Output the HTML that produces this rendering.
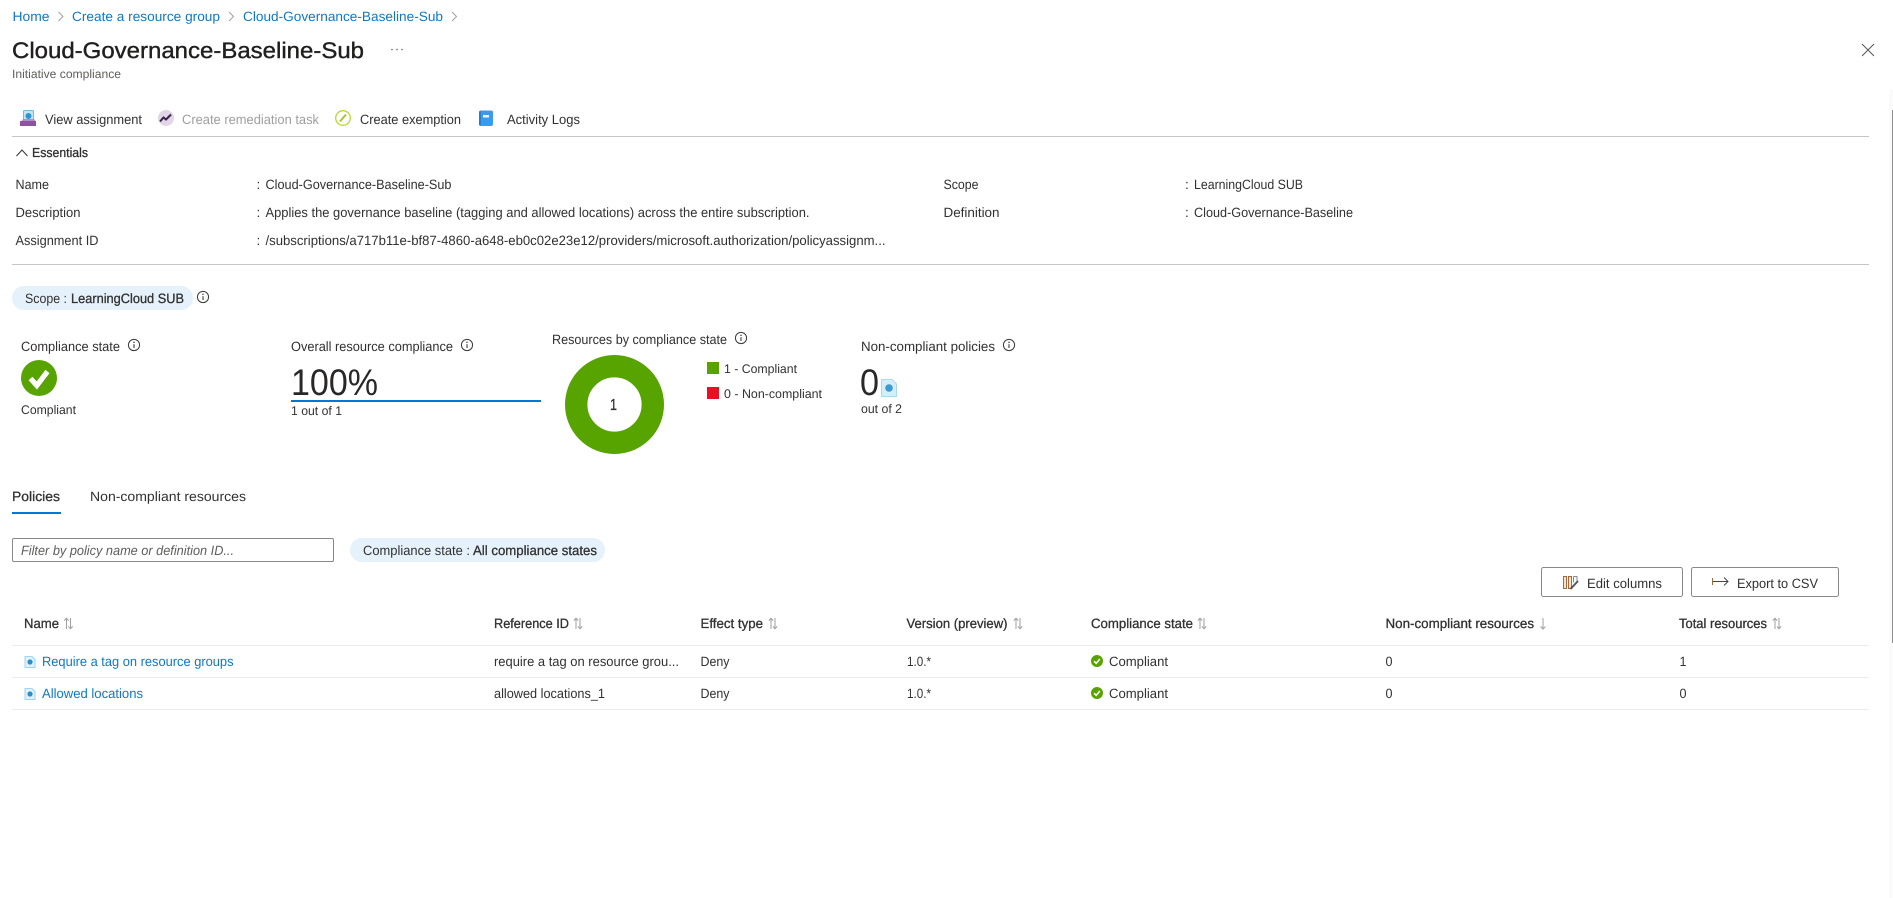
<!DOCTYPE html>
<html lang="en"><head><meta charset="utf-8"><title>Cloud-Governance-Baseline-Sub</title>
<style>
html,body{margin:0;padding:0;background:#fff;width:1893px;height:898px;overflow:hidden}
svg{display:block}
text{font-family:"Liberation Sans",sans-serif;font-size:13.5px;fill:#323130;text-rendering:geometricPrecision}
.l{fill:#0f78c8}
.s{stroke:#323130;stroke-width:.3px}
.g{fill:#a19f9d}
.m{fill:#605e5c}
</style></head><body>
<svg xmlns="http://www.w3.org/2000/svg" width="1893" height="898" viewBox="0 0 1893 898">
<defs>
<symbol id="info" viewBox="0 0 14 14" overflow="visible"><circle cx="7" cy="7" r="5.6" fill="none" stroke="#3b3a39" stroke-width="1"/><path d="M7 6.2V10" stroke="#3b3a39" stroke-width="1.1" fill="none"/><circle cx="7" cy="4.3" r=".75" fill="#3b3a39"/></symbol>
<symbol id="sort" viewBox="0 0 10 13" overflow="visible"><path d="M3 12V1.2M.8 3.6 3 1.2 5.2 3.6M7 1V11.8M4.9 9.4 7 11.8 9.2 9.4" fill="none" stroke="#a19f9d" stroke-width="1"/></symbol>
<symbol id="doc" viewBox="0 0 11 12" overflow="visible"><path d="M.5.5H7.5L10.5 3.5V11.5H.5Z" fill="#e1f1fa" stroke="#9fd4ee" stroke-width="1"/><circle cx="5.5" cy="6" r="2.6" fill="#2f8fc4"/></symbol>
<symbol id="ok" viewBox="0 0 12 12" overflow="visible"><circle cx="6" cy="6" r="6" fill="#57a300"/><path d="M3.1 6.2 5.2 8.3 8.9 4" fill="none" stroke="#fff" stroke-width="1.6"/></symbol>
</defs>
<rect width="1893" height="898" fill="#fff"/>

<!-- breadcrumb -->
<text class="l" x="12.5" y="21" textLength="37" lengthAdjust="spacingAndGlyphs">Home</text>
<path d="M58.5 12 63 16.5 58.5 21" fill="none" stroke="#a19f9d"/>
<text class="l" x="72" y="21" textLength="148" lengthAdjust="spacingAndGlyphs">Create a resource group</text>
<path d="M229 12 233.500 16.500 229 21" fill="none" stroke="#a19f9d"/>
<text class="l" x="243" y="21" textLength="200" lengthAdjust="spacingAndGlyphs">Cloud-Governance-Baseline-Sub</text>
<path d="M452 12 456.500 16.500 452 21" fill="none" stroke="#a19f9d"/>

<!-- title -->
<text x="12" y="58" style="font-size:22.500px;fill:#201f1e;stroke:#201f1e;stroke-width:.4px" textLength="352" lengthAdjust="spacingAndGlyphs">Cloud-Governance-Baseline-Sub</text>
<g fill="#605e5c"><circle cx="392" cy="49.500" r=".8"/><circle cx="397" cy="49.500" r=".8"/><circle cx="402" cy="49.500" r=".8"/></g>
<text class="m" x="12" y="78" style="font-size:12px" textLength="109" lengthAdjust="spacingAndGlyphs">Initiative compliance</text>
<path d="M1862 44 1874 56M1874 44 1862 56" stroke="#555" stroke-width="1" fill="none"/>

<!-- toolbar -->
<rect x="23.500" y="110.500" width="10" height="12" rx="1" fill="#bfe6f7" stroke="#6dbce0"/>
<circle cx="28.500" cy="116" r="3" fill="#2f95cf"/>
<path d="M23 119H34L36 121.500H21Z" fill="#b58fc4"/><rect x="20" y="121" width="16" height="5" fill="#8a54a0"/>
<text x="45" y="124" textLength="97" lengthAdjust="spacingAndGlyphs">View assignment</text>

<circle cx="166" cy="118" r="8" fill="#e2d5e6"/>
<path d="M160 121.500 163.500 117.500 166 119.500 171 114.500" fill="none" stroke="#3a2350" stroke-width="2"/>
<text class="g" x="182" y="124" textLength="137" lengthAdjust="spacingAndGlyphs">Create remediation task</text>

<circle cx="343" cy="118" r="7.300" fill="#fff" stroke="#bcd631" stroke-width="1.300"/>
<path d="M340 121.500 346 114.500" stroke="#aac62a" stroke-width="2" fill="none"/>
<text x="360" y="124" textLength="101" lengthAdjust="spacingAndGlyphs">Create exemption</text>

<rect x="479" y="110.500" width="14" height="15.500" rx="2" fill="#3a9bec"/><rect x="479" y="111" width="2" height="14.500" rx="1" fill="#2a7fcc"/>
<rect x="483" y="115" width="6" height="2.500" fill="#e8f4fd"/>
<text x="507" y="124" textLength="73" lengthAdjust="spacingAndGlyphs">Activity Logs</text>

<rect x="12" y="136" width="1857" height="1" fill="#c8c6c4"/>

<!-- essentials -->
<path d="M16.500 156 22 150 27.500 156" fill="none" stroke="#323130"/>
<text class="s" x="32" y="157" textLength="56" lengthAdjust="spacingAndGlyphs" style="font-size:13px">Essentials</text>

<text x="15.500" y="189" textLength="33.500" lengthAdjust="spacingAndGlyphs">Name</text>
<text x="15.500" y="217" textLength="65" lengthAdjust="spacingAndGlyphs">Description</text>
<text x="15.500" y="245" textLength="83" lengthAdjust="spacingAndGlyphs">Assignment ID</text>
<text x="256.500" y="189">:</text><text x="256.500" y="217">:</text><text x="256.500" y="245">:</text>
<text x="265.500" y="189" textLength="186" lengthAdjust="spacingAndGlyphs">Cloud-Governance-Baseline-Sub</text>
<text x="265.500" y="217" textLength="544" lengthAdjust="spacingAndGlyphs">Applies the governance baseline (tagging and allowed locations) across the entire subscription.</text>
<text x="265.500" y="245" textLength="620" lengthAdjust="spacingAndGlyphs">/subscriptions/a717b11e-bf87-4860-a648-eb0c02e23e12/providers/microsoft.authorization/policyassignm...</text>
<text x="943.500" y="189" textLength="35" lengthAdjust="spacingAndGlyphs">Scope</text>
<text x="943.500" y="217" textLength="56" lengthAdjust="spacingAndGlyphs">Definition</text>
<text x="1185" y="189">:</text><text x="1185" y="217">:</text>
<text x="1194" y="189" textLength="109" lengthAdjust="spacingAndGlyphs">LearningCloud SUB</text>
<text x="1194" y="217" textLength="159" lengthAdjust="spacingAndGlyphs">Cloud-Governance-Baseline</text>

<rect x="12" y="264" width="1857" height="1" fill="#c8c6c4"/>

<!-- scope pill -->
<rect x="12" y="286" width="181" height="24" rx="12" fill="#e5f1fb"/>
<text x="25" y="303" textLength="42" lengthAdjust="spacingAndGlyphs">Scope :</text>
<text class="s" x="71" y="303" textLength="113" lengthAdjust="spacingAndGlyphs">LearningCloud SUB</text>
<use href="#info" x="196" y="290" width="14" height="14"/>

<!-- KPIs -->
<text x="21" y="351" textLength="99" lengthAdjust="spacingAndGlyphs">Compliance state</text>
<use href="#info" x="127" y="338" width="14" height="14"/>
<circle cx="39" cy="378" r="18" fill="#57a300"/>
<path d="M30.500 378.500 36.800 385.500 47.500 371.500" fill="none" stroke="#fff" stroke-width="5.200"/>
<text x="21" y="414" textLength="55" lengthAdjust="spacingAndGlyphs" style="font-size:12.500px">Compliant</text>

<text x="291" y="351" textLength="162" lengthAdjust="spacingAndGlyphs">Overall resource compliance</text>
<use href="#info" x="460" y="338" width="14" height="14"/>
<text x="291" y="395" textLength="87" lengthAdjust="spacingAndGlyphs" style="font-size:37px;fill:#292827">100%</text>
<rect x="291" y="400" width="250" height="2" fill="#0078d4"/>
<text x="291" y="415" textLength="51" lengthAdjust="spacingAndGlyphs" style="font-size:12.500px">1 out of 1</text>

<text x="552" y="344" textLength="175" lengthAdjust="spacingAndGlyphs">Resources by compliance state</text>
<use href="#info" x="734" y="331" width="14" height="14"/>
<circle cx="614.500" cy="404.500" r="38.300" fill="none" stroke="#57a300" stroke-width="22.400"/>
<text class="s" x="610" y="410" textLength="7" lengthAdjust="spacingAndGlyphs" style="font-size:16px">1</text>
<rect x="707" y="362" width="12" height="12" fill="#57a300"/>
<text x="724" y="373" textLength="73" lengthAdjust="spacingAndGlyphs" style="font-size:12.500px">1 - Compliant</text>
<rect x="707" y="387" width="12" height="12" fill="#e81123"/>
<text x="724" y="398" textLength="98" lengthAdjust="spacingAndGlyphs" style="font-size:12.500px">0 - Non-compliant</text>

<text x="861" y="351" textLength="134" lengthAdjust="spacingAndGlyphs">Non-compliant policies</text>
<use href="#info" x="1002" y="338" width="14" height="14"/>
<text x="860" y="395" textLength="19" lengthAdjust="spacingAndGlyphs" style="font-size:37px;fill:#292827">0</text>
<path d="M881.500 379.500H892L896.500 384V396.500H881.500Z" fill="#d6edf8" stroke="#a8d9ef"/>
<circle cx="889" cy="388" r="3.800" fill="#3a9bd1"/>
<text x="861" y="413" textLength="41" lengthAdjust="spacingAndGlyphs" style="font-size:12.500px">out of 2</text>

<!-- tabs -->
<text class="s" x="12" y="501" textLength="48" lengthAdjust="spacingAndGlyphs">Policies</text>
<rect x="12" y="512" width="49" height="2" fill="#0078d4"/>
<text x="90" y="501" textLength="156" lengthAdjust="spacingAndGlyphs">Non-compliant resources</text>

<!-- filter -->
<rect x="12.500" y="538.500" width="321" height="23" rx="1.500" fill="#fff" stroke="#8a8886"/>
<text class="m" x="21" y="555" textLength="213" lengthAdjust="spacingAndGlyphs" style="font-style:italic">Filter by policy name or definition ID...</text>
<rect x="350" y="538" width="255" height="24" rx="12" fill="#e5f1fb"/>
<text x="363" y="555" textLength="107" lengthAdjust="spacingAndGlyphs">Compliance state :</text>
<text class="s" x="473" y="555" textLength="124" lengthAdjust="spacingAndGlyphs">All compliance states</text>

<!-- buttons -->
<rect x="1541.500" y="567.500" width="141" height="29" rx="2" fill="#fff" stroke="#8a8886"/>
<path d="M1563.500 576.500h3v12h-3ZM1568.500 576.500h3v12h-3Z" fill="#f3e3d3" stroke="#a8683a"/>
<path d="M1573.500 576.500h3.500v5M1573.500 576.500v6" fill="none" stroke="#8a8886"/>
<path d="M1570.500 589 1578 581" fill="none" stroke="#555" stroke-width="2"/>
<text x="1587" y="588" textLength="75" lengthAdjust="spacingAndGlyphs">Edit columns</text>
<rect x="1691.500" y="567.500" width="147" height="29" rx="2" fill="#fff" stroke="#8a8886"/>
<path d="M1712.500 578V585" stroke="#a8683a" fill="none"/>
<path d="M1713 581.500H1728M1724 577.500 1728 581.500 1724 585.500" stroke="#444" fill="none"/>
<text x="1737" y="588" textLength="81" lengthAdjust="spacingAndGlyphs">Export to CSV</text>

<!-- table header -->
<text class="s" x="24" y="628" textLength="35" lengthAdjust="spacingAndGlyphs">Name</text>
<use href="#sort" x="63.500" y="617" width="10" height="13"/>
<text class="s" x="494" y="628" textLength="75" lengthAdjust="spacingAndGlyphs">Reference ID</text>
<use href="#sort" x="573" y="617" width="10" height="13"/>
<text class="s" x="700.500" y="628" textLength="62.500" lengthAdjust="spacingAndGlyphs">Effect type</text>
<use href="#sort" x="768" y="617" width="10" height="13"/>
<text class="s" x="906.500" y="628" textLength="101" lengthAdjust="spacingAndGlyphs">Version (preview)</text>
<use href="#sort" x="1013" y="617" width="10" height="13"/>
<text class="s" x="1091" y="628" textLength="102" lengthAdjust="spacingAndGlyphs">Compliance state</text>
<use href="#sort" x="1197" y="617" width="10" height="13"/>
<text class="s" x="1385.500" y="628" textLength="148.500" lengthAdjust="spacingAndGlyphs">Non-compliant resources</text>
<path d="M1543 618V629M1540.500 626.500 1543 629 1545.500 626.500" fill="none" stroke="#a19f9d"/>
<text class="s" x="1679" y="628" textLength="88" lengthAdjust="spacingAndGlyphs">Total resources</text>
<use href="#sort" x="1772" y="617" width="10" height="13"/>

<rect x="12" y="645" width="1857" height="1" fill="#edebe9"/>
<rect x="12" y="677" width="1857" height="1" fill="#edebe9"/>
<rect x="12" y="709" width="1857" height="1" fill="#edebe9"/>

<!-- rows -->
<use href="#doc" x="24.500" y="656" width="11" height="12"/>
<text class="l" x="42" y="666" textLength="191.500" lengthAdjust="spacingAndGlyphs">Require a tag on resource groups</text>
<text x="494" y="666" textLength="185" lengthAdjust="spacingAndGlyphs">require a tag on resource grou...</text>
<text x="700.500" y="666" textLength="29" lengthAdjust="spacingAndGlyphs">Deny</text>
<text x="907" y="666" textLength="24" lengthAdjust="spacingAndGlyphs">1.0.*</text>
<use href="#ok" x="1091" y="655" width="12" height="12"/>
<text x="1109" y="666" textLength="59" lengthAdjust="spacingAndGlyphs">Compliant</text>
<text x="1385.500" y="666" textLength="7" lengthAdjust="spacingAndGlyphs">0</text>
<text x="1679.500" y="666" textLength="7" lengthAdjust="spacingAndGlyphs">1</text>

<use href="#doc" x="24.500" y="688" width="11" height="12"/>
<text class="l" x="42" y="698" textLength="101" lengthAdjust="spacingAndGlyphs">Allowed locations</text>
<text x="494" y="698" textLength="111" lengthAdjust="spacingAndGlyphs">allowed locations_1</text>
<text x="700.500" y="698" textLength="29" lengthAdjust="spacingAndGlyphs">Deny</text>
<text x="907" y="698" textLength="24" lengthAdjust="spacingAndGlyphs">1.0.*</text>
<use href="#ok" x="1091" y="687" width="12" height="12"/>
<text x="1109" y="698" textLength="59" lengthAdjust="spacingAndGlyphs">Compliant</text>
<text x="1385.500" y="698" textLength="7" lengthAdjust="spacingAndGlyphs">0</text>
<text x="1679.500" y="698" textLength="7" lengthAdjust="spacingAndGlyphs">0</text>

<!-- scrollbar -->
<rect x="1889" y="90" width="4" height="808" fill="#fafafa"/>
<rect x="1892" y="110" width="1" height="533" fill="#8a8a8a"/>
</svg>
</body></html>
